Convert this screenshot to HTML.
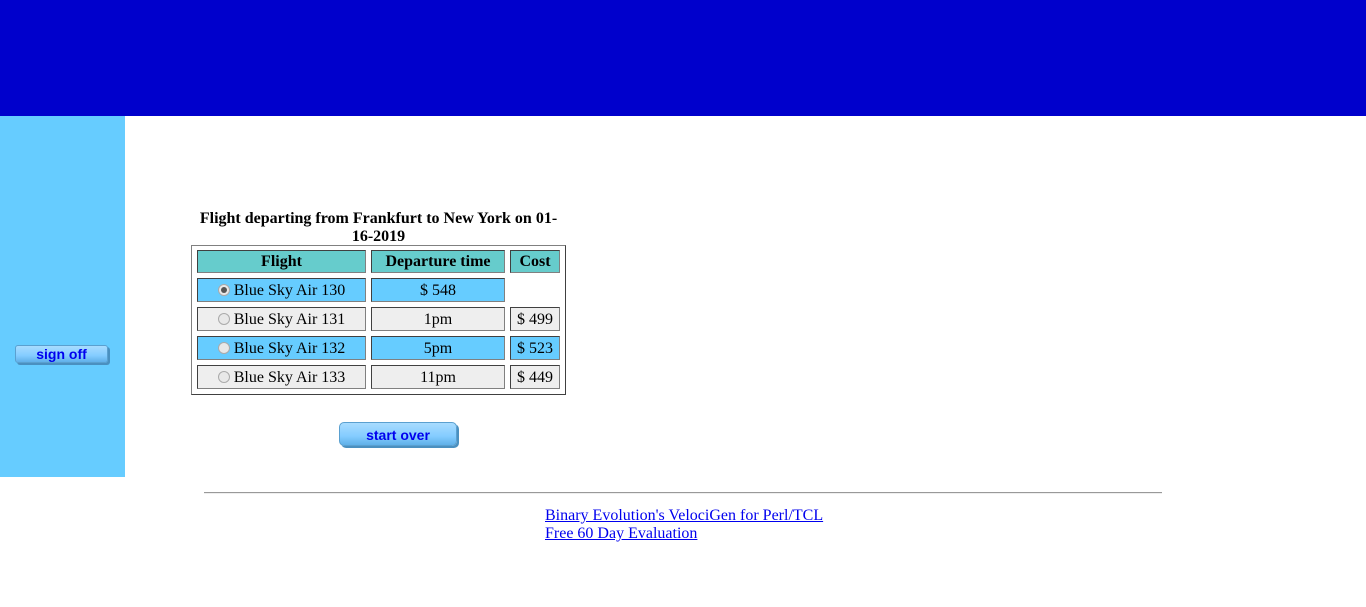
<!DOCTYPE html>
<html><head><style>
body{margin:0;width:1366px;height:607px;background:#fff;position:relative;font-family:"Liberation Serif",serif;overflow:hidden}
.a{position:absolute}
.c{position:absolute;box-sizing:border-box;border:1px solid;border-color:#404040 #808080 #808080 #404040;text-align:center;font-size:16px;line-height:24px;color:#000}
.h{background:#66cccc;font-weight:bold;line-height:22px}
.b{background:#66ccff}
.g{background:#eeeeee}
.r{display:inline-block;width:12px;height:12px;border-radius:50%;border:1px solid #aaa;background:#e8e8e8;box-sizing:border-box;vertical-align:-1px;margin-right:4px;position:relative}
.r.on::after{content:"";position:absolute;left:2px;top:2px;width:6px;height:6px;border-radius:50%;background:#555}
.btn{position:absolute;box-sizing:border-box;background:linear-gradient(#a8dcff,#84ccff 60%,#60b0e8);border:1px solid #5aa0d0;border-radius:3px;box-shadow:2px 2px 0 #4a90c0;color:#0000ee;font:bold 14px "Liberation Sans",sans-serif;text-align:center}
a{color:#0000ee}
</style></head><body>
<div class="a" style="left:0;top:0;width:1366px;height:116px;background:#0000cc"></div>
<div class="a" style="left:0;top:116px;width:125px;height:361px;background:#66ccff"></div>
<div class="btn" style="left:15px;top:345px;width:93px;height:18px;line-height:16px">sign off</div>
<div class="a" style="left:191px;top:210px;width:375px;text-align:center;font-weight:bold;font-size:16px;line-height:18px">Flight departing from Frankfurt to New York on 01-16-2019</div>
<div class="a" style="left:191px;top:245px;width:375px;height:150px;box-sizing:border-box;border:1px solid;border-color:#808080 #404040 #404040 #808080"></div>
<div class="c h" style="left:197px;top:250px;width:169px;height:23px">Flight</div>
<div class="c h" style="left:371px;top:250px;width:134px;height:23px">Departure time</div>
<div class="c h" style="left:510px;top:250px;width:50px;height:23px">Cost</div>
<div class="c b" style="left:197px;top:278px;width:169px;height:24px"><span class="r on"></span>Blue Sky Air 130</div>
<div class="c b" style="left:371px;top:278px;width:134px;height:24px">$ 548</div>
<div class="c g" style="left:197px;top:307px;width:169px;height:24px"><span class="r"></span>Blue Sky Air 131</div>
<div class="c g" style="left:371px;top:307px;width:134px;height:24px">1pm</div>
<div class="c g" style="left:510px;top:307px;width:50px;height:24px">$ 499</div>
<div class="c b" style="left:197px;top:336px;width:169px;height:24px"><span class="r"></span>Blue Sky Air 132</div>
<div class="c b" style="left:371px;top:336px;width:134px;height:24px">5pm</div>
<div class="c b" style="left:510px;top:336px;width:50px;height:24px">$ 523</div>
<div class="c g" style="left:197px;top:365px;width:169px;height:24px"><span class="r"></span>Blue Sky Air 133</div>
<div class="c g" style="left:371px;top:365px;width:134px;height:24px">11pm</div>
<div class="c g" style="left:510px;top:365px;width:50px;height:24px">$ 449</div>
<div class="btn" style="left:339px;top:422px;width:118px;height:24px;line-height:24px;border-radius:5px">start over</div>
<div class="a" style="left:204px;top:492px;width:958px;height:0;border-top:1px solid #999;border-bottom:1px solid #eee"></div>
<div class="a" style="left:545px;top:507px;font-size:16px;line-height:18px"><a href="#">Binary Evolution's VelociGen for Perl/TCL</a><br><a href="#">Free 60 Day Evaluation</a></div>
</body></html>
